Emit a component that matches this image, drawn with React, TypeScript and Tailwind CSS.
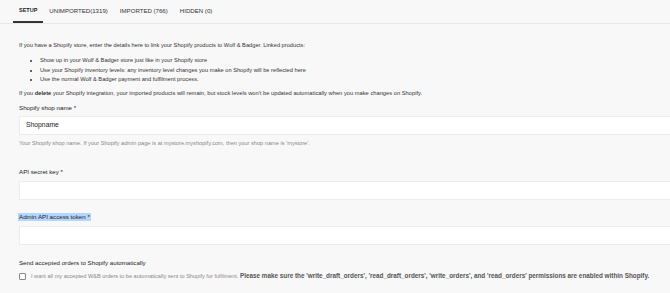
import React from 'react';

const tabs = [
    { label: 'SETUP', active: true },
    { label: 'UNIMPORTED(1319)', active: false },
    { label: 'IMPORTED (766)', active: false },
    { label: 'HIDDEN (0)', active: false },
];

const bullets = [
    'Show up in your Wolf & Badger store just like in your Shopify store',
    'Use your Shopify inventory levels: any inventory level changes you make on Shopify will be reflected here',
    'Use the normal Wolf & Badger payment and fulfilment process.',
];

function Field({ label, value, help, selected }: { label: string; value?: string; help?: string; selected?: boolean }) {
    return (
        <div>
            <div className="h-[9px] flex items-center text-[6.2px] text-[#222]">
                <span className={selected ? 'bg-[#b4d5fe] px-px -mx-px leading-[8px]' : 'leading-[8px]'}>
                    {label}
                </span>
            </div>
            <div className="mt-[4px] h-[19px] bg-white border border-r-0 border-[#ececec] flex items-center pl-[6px] text-[6.8px] text-[#222]">
                {value}
            </div>
            {help && <p className="mt-[3.5px] text-[5.65px] text-[#888] leading-[8px]">{help}</p>}
        </div>
    );
}

export default function App() {
    return (
        <div
            className="w-[670px] h-[293px] overflow-hidden bg-[#f8f8f8] text-[#333] text-[5.75px]"
            style={{ fontFamily: '"Liberation Sans", Arial, sans-serif' }}
        >
            {/* Tabs */}
            <div className="h-[24px] flex items-end border-b border-[#e8e8e8] pl-[13px]">
                {tabs.map((tab) => (
                    <div
                        key={tab.label}
                        className={
                            tab.active
                                ? 'h-[24px] px-[6px] flex items-center text-[5.5px] font-bold text-[#222] border-b-2 border-[#333]'
                                : 'h-[24px] px-[6px] flex items-center text-[6.1px] text-[#333]'
                        }
                    >
                        {tab.label}
                    </div>
                ))}
            </div>

            <div className="pl-[19px] pt-[17px]">
                <p className="leading-[8px] text-[5.7px]">
                    If you have a Shopify store, enter the details here to link your Shopify products to Wolf &amp; Badger. Linked products:
                </p>
                <ul className="mt-[7px] pl-[21px] list-disc leading-[9.5px] text-[5.7px]">
                    {bullets.map((b) => (
                        <li key={b}>{b}</li>
                    ))}
                </ul>
                <p className="mt-[4px] leading-[8px]">
                    If you <b className="font-bold">delete</b> your Shopify integration, your imported products will remain, but stock levels won't be updated automatically when you make changes on Shopify.
                </p>

                <div className="mt-[6.5px]">
                    <Field
                        label="Shopify shop name *"
                        value="Shopname"
                        help="Your Shopify shop name. If your Shopify admin page is at mystore.myshopify.com, then your shop name is 'mystore'."
                    />
                </div>
                <div className="mt-[21px]">
                    <Field label="API secret key *" />
                </div>
                <div className="mt-[13px]">
                    <Field label="Admin API access token *" selected />
                </div>

                <div className="mt-[14px]">
                    <p className="leading-[8px] text-[6.15px] text-[#222]">Send accepted orders to Shopify automatically</p>
                    <div className="mt-[5.5px] flex items-center">
                        <span className="w-[7px] h-[7px] border border-[#888] rounded-[1px] bg-white mr-[5px] shrink-0" />
                        <span className="text-[5.6px] text-[#888] leading-[8px] whitespace-nowrap">
                            I want all my accepted W&amp;B orders to be automatically sent to Shopify for fulfilment.{' '}
                            <b className="font-bold text-[#555] text-[6.35px]">
                                Please make sure the 'write_draft_orders', 'read_draft_orders', 'write_orders', and 'read_orders' permissions are enabled within Shopify.
                            </b>
                        </span>
                    </div>
                </div>
            </div>
        </div>
    );
}
